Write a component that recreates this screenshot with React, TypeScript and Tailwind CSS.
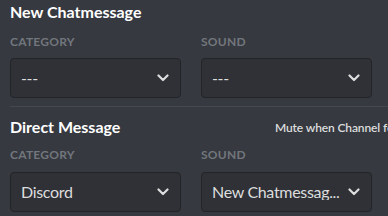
import React from "react";

const Chevron = () => (
  <svg width="12" height="8" viewBox="0 0 12 8" className="shrink-0">
    <path d="M1.5 1.5 L6 6 L10.5 1.5" fill="none" stroke="#dcddde" strokeWidth="2.2" strokeLinecap="round" strokeLinejoin="round" />
  </svg>
);

const Select = ({ value }: { value: string }) => (
  <div className="flex h-[40px] w-[171px] items-center justify-between gap-[2px] rounded-[4px] border border-[#222428] bg-[#2f3136] pl-[10px] pr-[11px]">
    <span className="truncate text-[16px] leading-none tracking-[-0.02em] text-[#dcddde]">{value}</span>
    <Chevron />
  </div>
);

const Label = ({ children }: { children: React.ReactNode }) => (
  <div className="text-[12px] font-bold uppercase leading-none tracking-[0.02em] text-[#72767d]">{children}</div>
);

export default function App() {
  return (
    <div
      className="h-[216px] w-[388px] overflow-hidden bg-[#36393f] pl-[10px]"
      style={{ fontFamily: 'Lato, "Noto Sans", sans-serif' }}
    >
      <div className="pt-[2px]">
        <div className="text-[16px] font-bold leading-[20px] text-white">New Chatmessage</div>
        <div className="mt-[14px] flex gap-[20px]">
          <div className="flex flex-col gap-[10px]">
            <Label>Category</Label>
            <Select value="---" />
          </div>
          <div className="flex flex-col gap-[10px]">
            <Label>Sound</Label>
            <Select value="---" />
          </div>
        </div>
      </div>
      <div className="mt-[8px] h-px bg-[#45484e]" />
      <div className="pt-[10px]">
        <div className="flex items-end whitespace-nowrap">
          <div className="w-[265px] shrink-0 text-[16px] font-bold leading-[20px] text-white">Direct Message</div>
          <div className="shrink-0 pb-[3px] text-[12px] font-semibold leading-none tracking-[-0.01em] text-[#dcddde]">Mute when Channel focused</div>
        </div>
        <div className="mt-[12px] flex gap-[20px]">
          <div className="flex flex-col gap-[11px]">
            <Label>Category</Label>
            <Select value="Discord" />
          </div>
          <div className="flex flex-col gap-[11px]">
            <Label>Sound</Label>
            <Select value="New Chatmessag..." />
          </div>
        </div>
      </div>
    </div>
  );
}
